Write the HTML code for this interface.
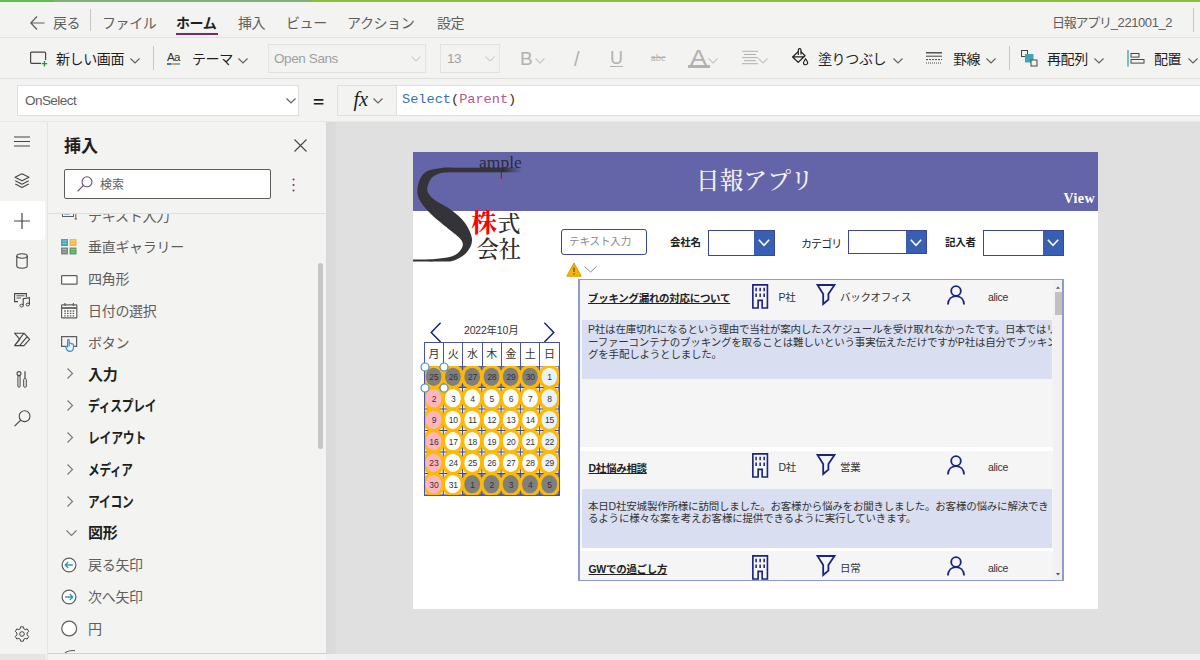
<!DOCTYPE html>
<html lang="ja">
<head>
<meta charset="utf-8">
<title>日報アプリ_221001_2</title>
<style>
*{box-sizing:border-box;margin:0;padding:0}
html,body{width:1200px;height:660px;overflow:hidden;background:#f3f3f2}
body{position:relative;font-family:"Liberation Sans","Noto Sans CJK JP",sans-serif;color:#201f1e;font-size:14px}
.abs{position:absolute}
.t{position:absolute;white-space:nowrap;line-height:1}
#green{left:0;top:0;width:1200px;height:2px;background:linear-gradient(90deg,#62bd4e 0 4.5%,#80b07a 4.5% 26%,#8dbd3c 26% 100%)}
#menubar{left:0;top:2px;width:1200px;height:36px;background:#f3f3f2;border-bottom:1px solid #e3e2e0}
#toolbar{left:0;top:38px;width:1200px;height:41px;background:#f3f3f2;border-bottom:1px solid #e1dfdd}
#fbar{left:0;top:79px;width:1200px;height:43px;background:#f3f3f2;border-bottom:1px solid #e8e7e5}
.menu{color:#605e5c;font-size:14px;top:16px;letter-spacing:-0.4px}
.tb{font-size:14px;top:52px;color:#201f1e;letter-spacing:-0.4px}
.dis{color:#a19f9d}
svg{position:absolute;overflow:visible}
#rail{left:0;top:122px;width:47px;height:538px;background:#f3f3f2}
#panel{left:47px;top:122px;width:279px;height:538px;background:#f3f3f2;border-left:1px solid #e6e5e3}
#canvas{left:326px;top:122px;width:874px;height:538px;background:#e0e0e0}
#screen{left:413px;top:151.8px;width:685px;height:457px;background:#fff}
.item{font-size:14px;color:#605e5c;letter-spacing:-0.3px}
.cat{font-size:15px;color:#201f1e;font-weight:bold;letter-spacing:-0.3px}

.app{font-family:"Liberation Sans","Noto Sans CJK JP",sans-serif}
.lbl{font-size:10.5px;color:#222;font-weight:bold;letter-spacing:-0.3px}
.g{font-size:10.5px;color:#333;letter-spacing:-0.3px}
.gt{font-size:10.5px;color:#222;font-weight:bold;text-decoration:underline;letter-spacing:-0.3px}
.gb{font-size:10.5px;color:#333;line-height:12.5px;letter-spacing:-0.2px;white-space:nowrap;position:absolute}
.dd{position:absolute;background:#fff;border:1.5px solid #3d4596}
.ddb{position:absolute;background:#3860b2}
.wk{position:absolute;top:341.8px;height:25.2px;background:#fff;border:1.5px solid #4d53a3;font-size:11px;color:#333;text-align:center;line-height:22.5px}
.dn{position:absolute;font-size:8.5px;color:#333;text-align:center;width:20px;line-height:10px;letter-spacing:-0.2px}
</style>
</head>
<body>
<div id="green" class="abs"></div>
<div id="menubar" class="abs"></div>
<div id="toolbar" class="abs"></div>
<div id="fbar" class="abs"></div>
<div id="rail" class="abs"></div>
<div id="panel" class="abs"></div>
<div id="canvas" class="abs"></div>
<div id="screen" class="abs"></div>

<svg class="abs" style="left:30px;top:16px" width="15" height="14" viewBox="0 0 15 14"><path d="M7 0.5 L0.8 7 L7 13.5 M0.8 7 H14.5" fill="none" stroke="#605e5c" stroke-width="1.2"/></svg>
<div class="t menu" style="left:53px">戻る</div>
<div class="abs" style="left:90px;top:9px;width:1px;height:22px;background:#c8c6c4"></div>
<div class="t menu" style="left:102px">ファイル</div>
<div class="t menu" style="left:176px;font-weight:bold;color:#201f1e">ホーム</div>
<div class="abs" style="left:176px;top:33px;width:42px;height:2px;background:#742774"></div>
<div class="t menu" style="left:238px">挿入</div>
<div class="t menu" style="left:286px">ビュー</div>
<div class="t menu" style="left:347px">アクション</div>
<div class="t menu" style="left:437px">設定</div>
<div class="t menu" style="left:1052px;font-size:13px;top:16px;letter-spacing:-1.25px">日報アプリ<span style="letter-spacing:-0.42px">_221001_2</span></div>
<div class="abs" style="left:1193px;top:8px;width:1px;height:24px;background:#c8c6c4"></div>


<svg style="left:30px;top:51px" width="18" height="16" viewBox="0 0 18 16"><rect x="0.6" y="1.1" width="15" height="11.3" rx="1" fill="none" stroke="#484644" stroke-width="1.2"/><rect x="11" y="9" width="7" height="7" fill="#f3f3f2"/><path d="M14.5 10 V15.4 M11.8 12.7 H17.2" stroke="#2e8b3a" stroke-width="1.3"/></svg>
<div class="t tb" style="left:56px">新しい画面</div>
<svg style="left:130px;top:58px" width="10" height="6" viewBox="0 0 10 6"><path d="M0.5 0.5 L5 5 L9.5 0.5" fill="none" stroke="#605e5c" stroke-width="1.1"/></svg>
<div class="abs" style="left:153px;top:46px;width:1px;height:24px;background:#c8c6c4"></div>
<div class="t" style="left:167px;top:52px;font-size:11.5px;letter-spacing:-0.6px;color:#323130">Aa</div>
<div class="abs" style="left:167px;top:63px;width:13px;height:2px;background:linear-gradient(90deg,#2b7cd3 0 30%,#e8a33d 30% 65%,#6bb8c4 65% 100%)"></div>
<div class="t tb" style="left:192px">テーマ</div>
<svg style="left:238px;top:58px" width="10" height="6" viewBox="0 0 10 6"><path d="M0.5 0.5 L5 5 L9.5 0.5" fill="none" stroke="#605e5c" stroke-width="1.1"/></svg>
<div class="abs" style="left:268px;top:44px;width:158px;height:29px;border:1px solid #e4e2e0;background:#f3f3f2"></div>
<div class="t dis" style="left:274px;top:52px;font-size:13.5px;letter-spacing:-0.4px">Open Sans</div>
<svg style="left:411px;top:56px" width="10" height="6" viewBox="0 0 10 6"><path d="M0.5 0.5 L5 5 L9.5 0.5" fill="none" stroke="#d2d0ce" stroke-width="1.1"/></svg>
<div class="abs" style="left:440px;top:44px;width:60px;height:29px;border:1px solid #e4e2e0;background:#f3f3f2"></div>
<div class="t dis" style="left:447px;top:52px;font-size:13.5px;letter-spacing:-0.4px">13</div>
<svg style="left:485px;top:56px" width="10" height="6" viewBox="0 0 10 6"><path d="M0.5 0.5 L5 5 L9.5 0.5" fill="none" stroke="#d2d0ce" stroke-width="1.1"/></svg>
<div class="t dis" style="left:520px;top:49px;font-size:19px;color:#b3b1af">B</div>
<svg style="left:535px;top:58px" width="10" height="6" viewBox="0 0 10 6"><path d="M0.5 0.5 L5 5 L9.5 0.5" fill="none" stroke="#c8c6c4" stroke-width="1.1"/></svg>
<div class="t dis" style="left:574px;top:48.5px;font-size:20px;color:#b3b1af">/</div>
<div class="t dis" style="left:610px;top:49px;font-size:18px;color:#b3b1af;text-decoration:underline;text-underline-offset:2px;text-decoration-thickness:1px">U</div>
<div class="t dis" style="left:651px;top:53px;font-size:10.5px;color:#b3b1af;text-decoration:line-through;font-family:'Liberation Serif',serif">abc</div>
<div class="t dis" style="left:690px;top:47px;font-size:22px;color:#b3b1af;transform:scaleX(1.15);transform-origin:left">A</div>
<div class="abs" style="left:688px;top:65px;width:22px;height:3px;background:#b3b1af"></div>
<svg style="left:708px;top:58px" width="10" height="6" viewBox="0 0 10 6"><path d="M0.5 0.5 L5 5 L9.5 0.5" fill="none" stroke="#c8c6c4" stroke-width="1.1"/></svg>
<svg style="left:742px;top:50px" width="17" height="15" viewBox="0 0 17 15"><path d="M0 1.3 H16 M2 4.5 H14 M0 7.6 H16 M2 10.7 H14 M0 13.7 H16" stroke="#b3b1af" stroke-width="1"/></svg>
<svg style="left:758px;top:58px" width="10" height="6" viewBox="0 0 10 6"><path d="M0.5 0.5 L5 5 L9.5 0.5" fill="none" stroke="#c8c6c4" stroke-width="1.1"/></svg>
<svg style="left:791px;top:47px" width="18" height="19" viewBox="791 47 18 19"><path d="M798.2 51.6 L792.6 57 L798.2 62.4 L805 55.8 L800.8 51.6 M793.8 56.8 H804" fill="none" stroke="#201f1e" stroke-width="1.25" stroke-linejoin="round"/><path d="M798.3 55 V50.2 C798.3 48.2 801 48.2 801 50.2 V54.6" fill="none" stroke="#201f1e" stroke-width="1.2"/><path d="M805.6 58.8 C806.7 60.5 807.7 61.7 807.7 62.7 A2.1 2.1 0 0 1 803.5 62.7 C803.5 61.7 804.5 60.5 805.6 58.8Z" fill="none" stroke="#201f1e" stroke-width="1.1"/></svg>
<div class="t tb" style="left:818px">塗りつぶし</div>
<svg style="left:893px;top:58px" width="10" height="6" viewBox="0 0 10 6"><path d="M0.5 0.5 L5 5 L9.5 0.5" fill="none" stroke="#605e5c" stroke-width="1.1"/></svg>
<svg style="left:926px;top:52px" width="17" height="12" viewBox="0 0 17 12"><path d="M0 0.8 H16" stroke="#484644" stroke-width="1.4"/><path d="M0 4.2 H16" stroke="#484644" stroke-width="1"/><path d="M0 7.6 H16" stroke="#484644" stroke-width="1" stroke-dasharray="2 1"/><path d="M0 11 H16" stroke="#484644" stroke-width="1" stroke-dasharray="1 1"/></svg>
<div class="t tb" style="left:953px">罫線</div>
<svg style="left:986px;top:58px" width="10" height="6" viewBox="0 0 10 6"><path d="M0.5 0.5 L5 5 L9.5 0.5" fill="none" stroke="#605e5c" stroke-width="1.1"/></svg>
<div class="abs" style="left:1009px;top:46px;width:1px;height:24px;background:#c8c6c4"></div>
<svg style="left:1021px;top:50px" width="17" height="17" viewBox="0 0 17 17"><rect x="0.5" y="0.5" width="6" height="6" fill="none" stroke="#484644"/><rect x="4" y="4" width="8.5" height="8.5" fill="#3fa7b8"/><rect x="10" y="10" width="6" height="6" fill="#f3f3f2" stroke="#484644"/></svg>
<div class="t tb" style="left:1047px">再配列</div>
<svg style="left:1094px;top:58px" width="10" height="6" viewBox="0 0 10 6"><path d="M0.5 0.5 L5 5 L9.5 0.5" fill="none" stroke="#605e5c" stroke-width="1.1"/></svg>
<svg style="left:1127px;top:50px" width="18" height="17" viewBox="0 0 18 17"><path d="M1 0 V16.5" stroke="#3fa7b8" stroke-width="1.4"/><rect x="4" y="3.5" width="8" height="3.6" fill="none" stroke="#484644"/><rect x="4" y="9.5" width="13" height="3.6" fill="none" stroke="#484644"/></svg>
<div class="t tb" style="left:1154px">配置</div>
<svg style="left:1188px;top:58px" width="10" height="6" viewBox="0 0 10 6"><path d="M0.5 0.5 L5 5 L9.5 0.5" fill="none" stroke="#605e5c" stroke-width="1.1"/></svg>


<div class="abs" style="left:17px;top:85px;width:282px;height:31px;background:#fff;border:1px solid #e1dfdd"></div>
<div class="t" style="left:25px;top:94px;font-size:13.5px;color:#605e5c;letter-spacing:-0.55px">OnSelect</div>
<svg style="left:286px;top:98px" width="10" height="6" viewBox="0 0 10 6"><path d="M0.5 0.5 L5 5 L9.5 0.5" fill="none" stroke="#605e5c" stroke-width="1.1"/></svg>
<div class="t" style="left:313px;top:92.2px;font-size:19px;font-weight:bold;color:#201f1e;transform:scaleY(0.78);transform-origin:center">=</div>
<div class="abs" style="left:337px;top:84.5px;width:863px;height:31.5px;background:#fff;border:1px solid #e1dfdd;border-right:none"></div>
<div class="abs" style="left:338px;top:85.5px;width:58.5px;height:29.5px;background:#f3f3f2;border-right:1px solid #e1dfdd"></div>
<div class="t" style="left:353.5px;top:89px;font-size:20.5px;font-style:italic;font-family:'Liberation Serif',serif;color:#201f1e;letter-spacing:-0.2px">fx</div>
<svg style="left:373px;top:98px" width="10" height="6" viewBox="0 0 10 6"><path d="M0.5 0.5 L5 5 L9.5 0.5" fill="none" stroke="#605e5c" stroke-width="1.1"/></svg>
<div class="t" style="left:402px;top:93px;font-size:13.6px;font-family:'Liberation Mono','DejaVu Sans Mono',monospace;color:#323130"><span style="color:#3b71b9">Select</span>(<span style="color:#b8558f">Parent</span>)</div>


<div class="abs" style="left:0;top:201px;width:45px;height:39px;background:#fff;border-radius:0 3px 3px 0"></div>
<svg style="left:14px;top:136px" width="16" height="11" viewBox="0 0 16 11"><path d="M0 1 H16 M0 5.5 H16 M0 10 H16" stroke="#484644" stroke-width="1.1"/></svg>
<svg style="left:14px;top:173px" width="16" height="16" viewBox="0 0 16 16"><path d="M8 0.8 L15 4.3 L8 7.8 L1 4.3 Z M1.3 7.8 L8 11.2 L14.7 7.8 M1.3 11 L8 14.6 L14.7 11" fill="none" stroke="#484644" stroke-width="1.1" stroke-linejoin="round"/></svg>
<svg style="left:14px;top:213px" width="16" height="16" viewBox="0 0 16 16"><path d="M8 0 V16 M0 8 H16" stroke="#484644" stroke-width="1.2"/></svg>
<svg style="left:16px;top:253px" width="12" height="16" viewBox="0 0 12 16"><path d="M0.8 3 V13 C0.8 14.4 3 15.2 6 15.2 S11.2 14.4 11.2 13 V3" fill="none" stroke="#484644" stroke-width="1.1"/><ellipse cx="6" cy="3" rx="5.2" ry="2.2" fill="none" stroke="#484644" stroke-width="1.1"/></svg>
<svg style="left:14px;top:293px" width="17" height="15" viewBox="0 0 17 15"><path d="M4 8.6 H0.6 V0.6 H12.4 V4" fill="none" stroke="#484644" stroke-width="1.1"/><path d="M2.5 2.8 H10.5 M2.5 5 H7" stroke="#484644" stroke-width="0.9"/><path d="M9.2 12.5 V5.8 L15.4 4.6 V11.4" fill="none" stroke="#484644" stroke-width="1.1"/><ellipse cx="7.6" cy="12.6" rx="1.7" ry="1.4" fill="none" stroke="#484644" stroke-width="1"/><ellipse cx="13.8" cy="11.5" rx="1.7" ry="1.4" fill="none" stroke="#484644" stroke-width="1"/></svg>
<svg style="left:14px;top:332px" width="17" height="15" viewBox="0 0 17 15"><path d="M0.6 1.2 H10 L15.6 7.4 L10 13.6 H0.6 L5.8 7.4 Z M9.6 1.6 L0.9 13.2 M13 4.8 L5.8 13.4" fill="none" stroke="#484644" stroke-width="1.1" stroke-linejoin="round"/></svg>
<svg style="left:16px;top:371px" width="12" height="17" viewBox="0 0 12 17"><circle cx="3" cy="2.6" r="2" fill="none" stroke="#484644" stroke-width="1.1"/><rect x="1.9" y="4.8" width="2.2" height="11.4" rx="1" fill="none" stroke="#484644" stroke-width="1"/><path d="M9 0.3 V7.6" stroke="#484644" stroke-width="1.2"/><rect x="7.7" y="7.6" width="2.6" height="8.6" rx="1" fill="none" stroke="#484644" stroke-width="1"/></svg>
<svg style="left:14px;top:410px" width="17" height="17" viewBox="0 0 17 17"><circle cx="10.6" cy="6.2" r="5.4" fill="none" stroke="#484644" stroke-width="1.1"/><path d="M6.7 10.1 L0.6 16.2" stroke="#484644" stroke-width="1.2"/></svg>
<svg style="left:14px;top:626px" width="16" height="16" viewBox="0 0 16 16"><circle cx="8" cy="8" r="2.3" fill="none" stroke="#484644" stroke-width="1"/><path d="M6.6 0.8 H9.4 L9.9 2.9 L11.2 3.6 L13.2 2.9 L14.7 5.4 L13.1 6.9 V8.9 L14.7 10.5 L13.2 13 L11.2 12.4 L9.9 13.1 L9.4 15.2 H6.6 L6.1 13.1 L4.8 12.4 L2.8 13 L1.3 10.5 L2.9 8.9 V6.9 L1.3 5.4 L2.8 2.9 L4.8 3.6 L6.1 2.9 Z" fill="none" stroke="#484644" stroke-width="1" stroke-linejoin="round"/></svg>


<div class="t" style="left:64px;top:138px;font-size:17px;font-weight:bold;color:#201f1e">挿入</div>
<svg style="left:294px;top:139px" width="13" height="13" viewBox="0 0 13 13"><path d="M0.5 0.5 L12.5 12.5 M12.5 0.5 L0.5 12.5" stroke="#484644" stroke-width="1.1"/></svg>
<div class="abs" style="left:64px;top:169px;width:207px;height:30px;background:#fff;border:1px solid #605e5c;border-radius:2px"></div>
<svg style="left:77px;top:176px" width="16" height="16" viewBox="0 0 16 16"><circle cx="10" cy="5.8" r="5" fill="none" stroke="#6b4a78" stroke-width="1.1"/><path d="M6.4 9.4 L0.6 15.4" stroke="#6b4a78" stroke-width="1.2"/></svg>
<div class="t" style="left:100px;top:179px;font-size:12px;color:#605e5c">検索</div>
<svg style="left:292px;top:178px" width="3" height="14" viewBox="0 0 3 14"><circle cx="1.5" cy="1.5" r="1" fill="#742774"/><circle cx="1.5" cy="7" r="1" fill="#742774"/><circle cx="1.5" cy="12.5" r="1" fill="#742774"/></svg>
<div class="abs" style="left:48px;top:213px;width:278px;height:1px;background:#e1dfdd"></div>
<div class="abs" style="left:48px;top:214px;width:278px;height:10px;overflow:hidden">
 <div class="t item" style="left:40px;top:-5px">テキスト入力</div>
 <svg style="left:14px;top:-7px" width="16" height="14" viewBox="0 0 16 14"><rect x="0.5" y="0.5" width="11" height="9" fill="none" stroke="#605e5c"/><rect x="2.5" y="5" width="5" height="2.6" fill="#3a96dd"/><path d="M12.5 3 H15 M13.8 3 V12 M12.5 12 H15" stroke="#605e5c" stroke-width="1" fill="none"/></svg>
</div>
<svg style="left:61px;top:239px" width="16" height="16" viewBox="0 0 16 16"><rect x="0" y="0" width="7" height="7" fill="#3fa7b8"/><rect x="8.5" y="0" width="7" height="7" fill="#f2b84b"/><rect x="0" y="8.5" width="7" height="7" fill="#7a8a82"/><rect x="8.5" y="8.5" width="7" height="7" fill="#5aa05e"/><path d="M1.5 2 H5.5 M1.5 4.5 H5.5 M10 2 H14 M10 4.5 H14 M1.5 10.5 H5.5 M1.5 13 H5.5 M10 10.5 H14 M10 13 H14" stroke="#fff" stroke-width="0.7" opacity="0.6"/></svg>
<div class="t item" style="left:88px;top:240px">垂直ギャラリー</div>
<svg style="left:61px;top:275px" width="17" height="10" viewBox="0 0 17 10"><rect x="0.6" y="0.6" width="15.4" height="8.6" rx="0.5" fill="#fff" stroke="#605e5c" stroke-width="1.2"/></svg>
<div class="t item" style="left:88px;top:272px">四角形</div>
<svg style="left:61px;top:303px" width="17" height="16" viewBox="0 0 17 16"><rect x="0.6" y="1.8" width="15.2" height="13" rx="0.6" fill="#fff" stroke="#605e5c" stroke-width="1.2"/><path d="M0.6 5 H15.8" stroke="#605e5c" stroke-width="1.8"/><path d="M4 0 V3 M12.4 0 V3" stroke="#605e5c" stroke-width="1.2"/><path d="M3.2 8 H13.4 M3.2 10.4 H13.4 M3.2 12.8 H13.4" stroke="#605e5c" stroke-width="1.3" stroke-dasharray="1.6 1.2"/></svg>
<div class="t item" style="left:88px;top:304px">日付の選択</div>
<svg style="left:61px;top:336px" width="17" height="16" viewBox="0 0 17 16"><path d="M5 10.4 H0.6 V0.6 H15.6 V10.4 H13" fill="none" stroke="#605e5c" stroke-width="1.2"/><path d="M8.2 4.2 V10.5 M8.2 7.5 C9.2 6.6 10.2 6.8 10.4 8 C11.6 7.4 12.6 8 12.4 9.6 V11.6 C12.4 14 11 15.4 9 15.4 C7 15.4 6 14.4 5.4 12.8 L4.6 10.6 C5.2 10 6.2 10.2 6.6 11 V4.2 C6.6 3.2 8.2 3.2 8.2 4.2Z" fill="#f3f3f2" stroke="#2b88d8" stroke-width="1.1" stroke-linejoin="round"/></svg>
<div class="t item" style="left:88px;top:336px">ボタン</div>
<svg style="left:67px;top:368px" width="6" height="11" viewBox="0 0 6 11"><path d="M0.5 0.5 L5.5 5.5 L0.5 10.5" fill="none" stroke="#797775" stroke-width="1.1"/></svg>
<div class="t cat" style="left:88px;top:367px">入力</div>
<svg style="left:67px;top:400px" width="6" height="11" viewBox="0 0 6 11"><path d="M0.5 0.5 L5.5 5.5 L0.5 10.5" fill="none" stroke="#797775" stroke-width="1.1"/></svg>
<div class="t cat" style="left:88px;top:398px;transform:scaleX(0.782);transform-origin:left">ディスプレイ</div>
<svg style="left:67px;top:432px" width="6" height="11" viewBox="0 0 6 11"><path d="M0.5 0.5 L5.5 5.5 L0.5 10.5" fill="none" stroke="#797775" stroke-width="1.1"/></svg>
<div class="t cat" style="left:88px;top:430px;transform:scaleX(0.789);transform-origin:left">レイアウト</div>
<svg style="left:67px;top:464px" width="6" height="11" viewBox="0 0 6 11"><path d="M0.5 0.5 L5.5 5.5 L0.5 10.5" fill="none" stroke="#797775" stroke-width="1.1"/></svg>
<div class="t cat" style="left:88px;top:462px;transform:scaleX(0.774);transform-origin:left">メディア</div>
<svg style="left:67px;top:496px" width="6" height="11" viewBox="0 0 6 11"><path d="M0.5 0.5 L5.5 5.5 L0.5 10.5" fill="none" stroke="#797775" stroke-width="1.1"/></svg>
<div class="t cat" style="left:88px;top:494px;transform:scaleX(0.782);transform-origin:left">アイコン</div>
<svg style="left:66px;top:530px" width="11" height="6" viewBox="0 0 11 6"><path d="M0.5 0.5 L5.5 5.5 L10.5 0.5" fill="none" stroke="#797775" stroke-width="1.1"/></svg>
<div class="t cat" style="left:88px;top:525px">図形</div>
<svg style="left:61px;top:557px" width="16" height="16" viewBox="0 0 16 16"><circle cx="8" cy="8" r="6.9" fill="#fff" stroke="#605e5c" stroke-width="1.2"/><path d="M4.2 8 H11.8 M7.2 5 L4.2 8 L7.2 11" fill="none" stroke="#2b9ab8" stroke-width="1.3"/></svg>
<div class="t item" style="left:88px;top:558px">戻る矢印</div>
<svg style="left:61px;top:589px" width="16" height="16" viewBox="0 0 16 16"><circle cx="8" cy="8" r="6.9" fill="#fff" stroke="#605e5c" stroke-width="1.2"/><path d="M4.2 8 H11.8 M8.8 5 L11.8 8 L8.8 11" fill="none" stroke="#2b9ab8" stroke-width="1.3"/></svg>
<div class="t item" style="left:88px;top:590px">次へ矢印</div>
<svg style="left:61px;top:620px" width="17" height="17" viewBox="0 0 17 17"><circle cx="8.2" cy="8.5" r="7.4" fill="#fff" stroke="#605e5c" stroke-width="1.2"/></svg>
<div class="t item" style="left:88px;top:622px">円</div>
<svg style="left:64px;top:649.5px" width="12" height="4" viewBox="0 0 12 4"><path d="M0.5 4 C2 1.2 6 0.4 11 0.6" fill="none" stroke="#605e5c" stroke-width="1.1"/></svg>
<div class="abs" style="left:318px;top:263px;width:5px;height:186px;background:#c8c6c4;border-radius:3px"></div>
<div class="abs" style="left:48px;top:653px;width:279px;height:1px;background:#d2d0ce"></div>
<div class="abs" style="left:48px;top:654px;width:279px;height:6px;background:#f5f4f3"></div>
<div class="abs" style="left:0;top:654px;width:46px;height:6px;background:#e6e5e4"></div>
<div class="abs" style="left:326px;top:122px;width:10.5px;height:532px;background:linear-gradient(90deg,#d9d9d9 0,#dbdbdb 80%,#e0e0e0 100%)"></div>
<div class="abs" style="left:326px;top:654px;width:874px;height:6px;background:#f0f0f0"></div>


<div class="app">
<div class="abs" style="left:413px;top:151.7px;width:685px;height:59px;background:#6465a8"></div>
<div class="t" style="left:696px;top:170px;font-size:23.5px;font-weight:500;font-family:'Liberation Serif','Noto Serif CJK JP','Noto Serif CJK SC',serif;color:#f2f2f2;letter-spacing:0.3px">日報アプリ</div>
<div class="t" style="left:1063.5px;top:191.5px;font-size:14px;letter-spacing:0.4px;font-weight:bold;font-family:'Liberation Serif',serif;color:#fff">View</div>

<svg style="left:413px;top:152px" width="120" height="112" viewBox="413 152 120 112"><defs><linearGradient id="tp" x1="0" x2="1"><stop offset="0" stop-color="#333338"/><stop offset="0.75" stop-color="#333338"/><stop offset="1" stop-color="#333338" stop-opacity="0"/></linearGradient></defs>
<path d="M452.0 167.7 C450.2 167.7 445.3 167.4 441.4 167.9 C437.5 168.4 431.9 169.0 428.5 170.6 C425.1 172.2 422.7 174.2 420.8 177.5 C418.9 180.8 417.4 186.5 417.4 190.5 C417.3 194.5 418.1 197.3 420.5 201.4 C422.9 205.5 427.0 210.2 432.0 215.0 C437.0 219.8 445.8 226.6 450.5 230.5 C455.2 234.4 457.9 236.1 460.0 238.5 C462.1 240.9 463.0 242.8 462.8 245.0 C462.6 247.2 461.1 250.0 459.0 252.0 C456.9 254.0 454.5 255.6 450.5 256.8 C446.5 258.0 441.2 258.5 435.0 259.0 C428.8 259.5 416.7 259.5 413.0 259.6 L413.0 261.6 C417.5 261.6 433.2 261.8 440.0 261.6 C446.8 261.4 449.5 262.1 454.0 260.5 C458.5 258.9 463.8 255.8 466.8 252.3 C469.8 248.8 472.3 244.4 472.0 239.5 C471.7 234.6 468.6 228.0 465.0 223.0 C461.4 218.0 455.7 213.4 450.5 209.5 C445.3 205.6 437.9 202.7 434.0 199.5 C430.1 196.3 428.1 193.6 427.4 190.5 C426.7 187.4 428.5 183.4 429.6 181.0 C430.7 178.6 432.0 177.3 434.0 176.0 C436.0 174.7 438.5 173.6 441.5 173.0 C444.5 172.4 450.2 172.4 452.0 172.3 Z" fill="#333338"/>
<rect x="451" y="167.7" width="71" height="4.6" fill="url(#tp)"/>
<path d="M501.3 170 V177" stroke="#333338" stroke-width="1"/><rect x="500.6" y="177.4" width="1.6" height="1.6" fill="#e00"/>
</svg>
<div class="t" style="left:479px;top:154px;font-size:17.5px;font-family:'Liberation Serif',serif;color:#2b2b3a">ample</div>
<div class="t" style="left:471px;top:211px;font-size:26px;font-weight:bold;font-family:'Liberation Serif','Noto Serif CJK JP','Noto Serif CJK SC',serif;color:#f00">株</div>
<div class="t" style="left:497.5px;top:213px;font-size:23px;font-weight:500;font-family:'Liberation Serif','Noto Serif CJK JP','Noto Serif CJK SC',serif;color:#2a2a2a">式</div>
<div class="t" style="left:476.5px;top:238.5px;font-size:22.5px;font-weight:500;font-family:'Liberation Serif','Noto Serif CJK JP','Noto Serif CJK SC',serif;color:#2a2a2a;letter-spacing:-0.5px">会社</div>

<div class="abs" style="left:561px;top:228.5px;width:86px;height:26px;background:#fff;border:1.5px solid #3d4596;border-radius:3px"></div>
<div class="t" style="left:569px;top:236px;font-size:10.5px;color:#8a8a8a;letter-spacing:-0.1px">テキスト入力</div>
<div class="t lbl" style="left:670px;top:237px">会社名</div>
<div class="dd" style="left:708px;top:229.5px;width:66.5px;height:26px"></div><div class="ddb" style="left:753.5px;top:230.5px;width:20px;height:24px"></div><svg style="left:757.5px;top:238.5px" width="12" height="8" viewBox="0 0 12 8"><path d="M0.8 0.8 L6 6.4 L11.2 0.8" fill="none" stroke="#fff" stroke-width="1.6"/></svg>
<div class="t" style="left:801px;top:238.5px;font-size:11px;color:#222;letter-spacing:-0.9px">カテゴリ</div>
<div class="dd" style="left:848px;top:230.4px;width:78.5px;height:23.2px"></div><div class="ddb" style="left:905.5px;top:231.4px;width:20px;height:21.2px"></div><svg style="left:909.5px;top:238.5px" width="12" height="8" viewBox="0 0 12 8"><path d="M0.8 0.8 L6 6.4 L11.2 0.8" fill="none" stroke="#fff" stroke-width="1.6"/></svg>
<div class="t lbl" style="left:945px;top:237px">記入者</div>
<div class="dd" style="left:983px;top:229.5px;width:81px;height:26.5px"></div><div class="ddb" style="left:1043px;top:230.5px;width:20px;height:24.5px"></div><svg style="left:1047px;top:238.5px" width="12" height="8" viewBox="0 0 12 8"><path d="M0.8 0.8 L6 6.4 L11.2 0.8" fill="none" stroke="#fff" stroke-width="1.6"/></svg>
<svg style="left:566px;top:262px" width="16" height="15" viewBox="0 0 16 15"><path d="M8 1 L15.2 14.2 H0.8 Z" fill="#f7b500" stroke="#d99a00" stroke-width="1" stroke-linejoin="round"/><path d="M8 5.5 V10" stroke="#5a4a00" stroke-width="1.2"/><circle cx="8" cy="12" r="0.8" fill="#5a4a00"/></svg>
<svg style="left:584px;top:266px" width="13" height="7" viewBox="0 0 13 7"><path d="M0.5 0.5 L6.5 6 L12.5 0.5" fill="none" stroke="#8a8886" stroke-width="1"/></svg>
<svg style="left:430px;top:322px" width="12" height="21" viewBox="0 0 12 21"><path d="M10.6 0.8 L1.2 10.4 L10.6 20" fill="none" stroke="#1a237e" stroke-width="1.5"/></svg>
<svg style="left:543px;top:322px" width="12" height="21" viewBox="0 0 12 21"><path d="M1.4 0.8 L10.8 10.4 L1.4 20" fill="none" stroke="#1a237e" stroke-width="1.5"/></svg>
<div class="t" style="left:464px;top:325px;font-size:10.5px;color:#333;letter-spacing:-0.2px">2022年10月</div>
<div class="wk" style="left:423.8px;width:20.3px">月</div>
<div class="wk" style="left:443.1px;width:20.3px">火</div>
<div class="wk" style="left:462.3px;width:20.3px">水</div>
<div class="wk" style="left:481.6px;width:20.3px">木</div>
<div class="wk" style="left:500.9px;width:20.3px">金</div>
<div class="wk" style="left:520.2px;width:20.3px">土</div>
<div class="wk" style="left:539.4px;width:20.3px">日</div>
<svg style="left:424.3px;top:366.3px;overflow:hidden" width="134.9" height="129.0" viewBox="0 0 134.9 129.0"><rect x="0" y="0" width="134.9" height="129.0" fill="#e9ebf7"/><rect x="0.0" y="0.0" width="19.3" height="21.5" fill="#8a8a9a"/><rect x="19.3" y="0.0" width="19.3" height="21.5" fill="#8a8a9a"/><rect x="38.5" y="0.0" width="19.3" height="21.5" fill="#8a8a9a"/><rect x="57.8" y="0.0" width="19.3" height="21.5" fill="#8a8a9a"/><rect x="77.1" y="0.0" width="19.3" height="21.5" fill="#8a8a9a"/><rect x="96.4" y="0.0" width="19.3" height="21.5" fill="#8a8a9a"/><rect x="38.5" y="107.5" width="19.3" height="21.5" fill="#8a8a9a"/><rect x="57.8" y="107.5" width="19.3" height="21.5" fill="#8a8a9a"/><rect x="77.1" y="107.5" width="19.3" height="21.5" fill="#8a8a9a"/><rect x="96.4" y="107.5" width="19.3" height="21.5" fill="#8a8a9a"/><rect x="115.6" y="107.5" width="19.3" height="21.5" fill="#8a8a9a"/><path d="M0.00 0 V129.0" stroke="#3d4596" stroke-width="1"/><path d="M19.27 0 V129.0" stroke="#3d4596" stroke-width="1"/><path d="M38.54 0 V129.0" stroke="#3d4596" stroke-width="1"/><path d="M57.81 0 V129.0" stroke="#3d4596" stroke-width="1"/><path d="M77.09 0 V129.0" stroke="#3d4596" stroke-width="1"/><path d="M96.36 0 V129.0" stroke="#3d4596" stroke-width="1"/><path d="M115.63 0 V129.0" stroke="#3d4596" stroke-width="1"/><path d="M134.90 0 V129.0" stroke="#3d4596" stroke-width="1"/><path d="M0 0.00 H134.9" stroke="#3d4596" stroke-width="1"/><path d="M0 21.50 H134.9" stroke="#3d4596" stroke-width="1"/><path d="M0 43.00 H134.9" stroke="#3d4596" stroke-width="1"/><path d="M0 64.50 H134.9" stroke="#3d4596" stroke-width="1"/><path d="M0 86.00 H134.9" stroke="#3d4596" stroke-width="1"/><path d="M0 107.50 H134.9" stroke="#3d4596" stroke-width="1"/><path d="M0 129.00 H134.9" stroke="#3d4596" stroke-width="1"/><ellipse cx="9.6" cy="10.8" rx="11.1" ry="12.3" fill="#ffb900"/><ellipse cx="28.9" cy="10.8" rx="11.1" ry="12.3" fill="#ffb900"/><ellipse cx="48.2" cy="10.8" rx="11.1" ry="12.3" fill="#ffb900"/><ellipse cx="67.5" cy="10.8" rx="11.1" ry="12.3" fill="#ffb900"/><ellipse cx="86.7" cy="10.8" rx="11.1" ry="12.3" fill="#ffb900"/><ellipse cx="106.0" cy="10.8" rx="11.1" ry="12.3" fill="#ffb900"/><ellipse cx="125.3" cy="10.8" rx="11.1" ry="12.3" fill="#ffb900"/><ellipse cx="9.6" cy="32.2" rx="11.1" ry="12.3" fill="#ffb900"/><ellipse cx="28.9" cy="32.2" rx="11.1" ry="12.3" fill="#ffb900"/><ellipse cx="48.2" cy="32.2" rx="11.1" ry="12.3" fill="#ffb900"/><ellipse cx="67.5" cy="32.2" rx="11.1" ry="12.3" fill="#ffb900"/><ellipse cx="86.7" cy="32.2" rx="11.1" ry="12.3" fill="#ffb900"/><ellipse cx="106.0" cy="32.2" rx="11.1" ry="12.3" fill="#ffb900"/><ellipse cx="125.3" cy="32.2" rx="11.1" ry="12.3" fill="#ffb900"/><ellipse cx="9.6" cy="53.8" rx="11.1" ry="12.3" fill="#ffb900"/><ellipse cx="28.9" cy="53.8" rx="11.1" ry="12.3" fill="#ffb900"/><ellipse cx="48.2" cy="53.8" rx="11.1" ry="12.3" fill="#ffb900"/><ellipse cx="67.5" cy="53.8" rx="11.1" ry="12.3" fill="#ffb900"/><ellipse cx="86.7" cy="53.8" rx="11.1" ry="12.3" fill="#ffb900"/><ellipse cx="106.0" cy="53.8" rx="11.1" ry="12.3" fill="#ffb900"/><ellipse cx="125.3" cy="53.8" rx="11.1" ry="12.3" fill="#ffb900"/><ellipse cx="9.6" cy="75.2" rx="11.1" ry="12.3" fill="#ffb900"/><ellipse cx="28.9" cy="75.2" rx="11.1" ry="12.3" fill="#ffb900"/><ellipse cx="48.2" cy="75.2" rx="11.1" ry="12.3" fill="#ffb900"/><ellipse cx="67.5" cy="75.2" rx="11.1" ry="12.3" fill="#ffb900"/><ellipse cx="86.7" cy="75.2" rx="11.1" ry="12.3" fill="#ffb900"/><ellipse cx="106.0" cy="75.2" rx="11.1" ry="12.3" fill="#ffb900"/><ellipse cx="125.3" cy="75.2" rx="11.1" ry="12.3" fill="#ffb900"/><ellipse cx="9.6" cy="96.8" rx="11.1" ry="12.3" fill="#ffb900"/><ellipse cx="28.9" cy="96.8" rx="11.1" ry="12.3" fill="#ffb900"/><ellipse cx="48.2" cy="96.8" rx="11.1" ry="12.3" fill="#ffb900"/><ellipse cx="67.5" cy="96.8" rx="11.1" ry="12.3" fill="#ffb900"/><ellipse cx="86.7" cy="96.8" rx="11.1" ry="12.3" fill="#ffb900"/><ellipse cx="106.0" cy="96.8" rx="11.1" ry="12.3" fill="#ffb900"/><ellipse cx="125.3" cy="96.8" rx="11.1" ry="12.3" fill="#ffb900"/><ellipse cx="9.6" cy="118.2" rx="11.1" ry="12.3" fill="#ffb900"/><ellipse cx="28.9" cy="118.2" rx="11.1" ry="12.3" fill="#ffb900"/><ellipse cx="48.2" cy="118.2" rx="11.1" ry="12.3" fill="#ffb900"/><ellipse cx="67.5" cy="118.2" rx="11.1" ry="12.3" fill="#ffb900"/><ellipse cx="86.7" cy="118.2" rx="11.1" ry="12.3" fill="#ffb900"/><ellipse cx="106.0" cy="118.2" rx="11.1" ry="12.3" fill="#ffb900"/><ellipse cx="125.3" cy="118.2" rx="11.1" ry="12.3" fill="#ffb900"/><ellipse cx="9.6" cy="10.8" rx="7.9" ry="9.1" fill="#7f7f7f"/><ellipse cx="28.9" cy="10.8" rx="7.9" ry="9.1" fill="#7f7f7f"/><ellipse cx="48.2" cy="10.8" rx="7.9" ry="9.1" fill="#7f7f7f"/><ellipse cx="67.5" cy="10.8" rx="7.9" ry="9.1" fill="#7f7f7f"/><ellipse cx="86.7" cy="10.8" rx="7.9" ry="9.1" fill="#7f7f7f"/><ellipse cx="106.0" cy="10.8" rx="7.9" ry="9.1" fill="#7f7f7f"/><ellipse cx="125.3" cy="10.8" rx="7.9" ry="9.1" fill="#e9f2fb"/><ellipse cx="9.6" cy="32.2" rx="7.9" ry="9.1" fill="#ffb6c1"/><ellipse cx="28.9" cy="32.2" rx="7.9" ry="9.1" fill="#fff"/><ellipse cx="48.2" cy="32.2" rx="7.9" ry="9.1" fill="#fff"/><ellipse cx="67.5" cy="32.2" rx="7.9" ry="9.1" fill="#fff"/><ellipse cx="86.7" cy="32.2" rx="7.9" ry="9.1" fill="#fff"/><ellipse cx="106.0" cy="32.2" rx="7.9" ry="9.1" fill="#fff"/><ellipse cx="125.3" cy="32.2" rx="7.9" ry="9.1" fill="#e9f2fb"/><ellipse cx="9.6" cy="53.8" rx="7.9" ry="9.1" fill="#ffb6c1"/><ellipse cx="28.9" cy="53.8" rx="7.9" ry="9.1" fill="#fff"/><ellipse cx="48.2" cy="53.8" rx="7.9" ry="9.1" fill="#fff"/><ellipse cx="67.5" cy="53.8" rx="7.9" ry="9.1" fill="#fff"/><ellipse cx="86.7" cy="53.8" rx="7.9" ry="9.1" fill="#fff"/><ellipse cx="106.0" cy="53.8" rx="7.9" ry="9.1" fill="#fff"/><ellipse cx="125.3" cy="53.8" rx="7.9" ry="9.1" fill="#e9f2fb"/><ellipse cx="9.6" cy="75.2" rx="7.9" ry="9.1" fill="#ffb6c1"/><ellipse cx="28.9" cy="75.2" rx="7.9" ry="9.1" fill="#fff"/><ellipse cx="48.2" cy="75.2" rx="7.9" ry="9.1" fill="#fff"/><ellipse cx="67.5" cy="75.2" rx="7.9" ry="9.1" fill="#fff"/><ellipse cx="86.7" cy="75.2" rx="7.9" ry="9.1" fill="#fff"/><ellipse cx="106.0" cy="75.2" rx="7.9" ry="9.1" fill="#fff"/><ellipse cx="125.3" cy="75.2" rx="7.9" ry="9.1" fill="#e9f2fb"/><ellipse cx="9.6" cy="96.8" rx="7.9" ry="9.1" fill="#ffb6c1"/><ellipse cx="28.9" cy="96.8" rx="7.9" ry="9.1" fill="#fff"/><ellipse cx="48.2" cy="96.8" rx="7.9" ry="9.1" fill="#fff"/><ellipse cx="67.5" cy="96.8" rx="7.9" ry="9.1" fill="#fff"/><ellipse cx="86.7" cy="96.8" rx="7.9" ry="9.1" fill="#fff"/><ellipse cx="106.0" cy="96.8" rx="7.9" ry="9.1" fill="#fff"/><ellipse cx="125.3" cy="96.8" rx="7.9" ry="9.1" fill="#e9f2fb"/><ellipse cx="9.6" cy="118.2" rx="7.9" ry="9.1" fill="#ffb6c1"/><ellipse cx="28.9" cy="118.2" rx="7.9" ry="9.1" fill="#fff"/><ellipse cx="48.2" cy="118.2" rx="7.9" ry="9.1" fill="#7f7f7f"/><ellipse cx="67.5" cy="118.2" rx="7.9" ry="9.1" fill="#7f7f7f"/><ellipse cx="86.7" cy="118.2" rx="7.9" ry="9.1" fill="#7f7f7f"/><ellipse cx="106.0" cy="118.2" rx="7.9" ry="9.1" fill="#7f7f7f"/><ellipse cx="125.3" cy="118.2" rx="7.9" ry="9.1" fill="#7f7f7f"/></svg>
<div class="abs" style="left:423.8px;top:365.8px;width:136px;height:130.2px;border:1.2px solid #4d53a3;border-top:none"></div>
<div class="dn" style="left:423.9px;top:372.1px">25</div>
<div class="dn" style="left:443.2px;top:372.1px">26</div>
<div class="dn" style="left:462.5px;top:372.1px">27</div>
<div class="dn" style="left:481.8px;top:372.1px">28</div>
<div class="dn" style="left:501.0px;top:372.1px">29</div>
<div class="dn" style="left:520.3px;top:372.1px">30</div>
<div class="dn" style="left:539.6px;top:372.1px">1</div>
<div class="dn" style="left:423.9px;top:393.6px">2</div>
<div class="dn" style="left:443.2px;top:393.6px">3</div>
<div class="dn" style="left:462.5px;top:393.6px">4</div>
<div class="dn" style="left:481.8px;top:393.6px">5</div>
<div class="dn" style="left:501.0px;top:393.6px">6</div>
<div class="dn" style="left:520.3px;top:393.6px">7</div>
<div class="dn" style="left:539.6px;top:393.6px">8</div>
<div class="dn" style="left:423.9px;top:415.1px">9</div>
<div class="dn" style="left:443.2px;top:415.1px">10</div>
<div class="dn" style="left:462.5px;top:415.1px">11</div>
<div class="dn" style="left:481.8px;top:415.1px">12</div>
<div class="dn" style="left:501.0px;top:415.1px">13</div>
<div class="dn" style="left:520.3px;top:415.1px">14</div>
<div class="dn" style="left:539.6px;top:415.1px">15</div>
<div class="dn" style="left:423.9px;top:436.6px">16</div>
<div class="dn" style="left:443.2px;top:436.6px">17</div>
<div class="dn" style="left:462.5px;top:436.6px">18</div>
<div class="dn" style="left:481.8px;top:436.6px">19</div>
<div class="dn" style="left:501.0px;top:436.6px">20</div>
<div class="dn" style="left:520.3px;top:436.6px">21</div>
<div class="dn" style="left:539.6px;top:436.6px">22</div>
<div class="dn" style="left:423.9px;top:458.1px">23</div>
<div class="dn" style="left:443.2px;top:458.1px">24</div>
<div class="dn" style="left:462.5px;top:458.1px">25</div>
<div class="dn" style="left:481.8px;top:458.1px">26</div>
<div class="dn" style="left:501.0px;top:458.1px">27</div>
<div class="dn" style="left:520.3px;top:458.1px">28</div>
<div class="dn" style="left:539.6px;top:458.1px">29</div>
<div class="dn" style="left:423.9px;top:479.6px">30</div>
<div class="dn" style="left:443.2px;top:479.6px">31</div>
<div class="dn" style="left:462.5px;top:479.6px">1</div>
<div class="dn" style="left:481.8px;top:479.6px">2</div>
<div class="dn" style="left:501.0px;top:479.6px">3</div>
<div class="dn" style="left:520.3px;top:479.6px">4</div>
<div class="dn" style="left:539.6px;top:479.6px">5</div>
<svg style="left:419.5px;top:361.5px" width="10" height="10" viewBox="0 0 10 10"><circle cx="5" cy="5" r="4" fill="#fff" stroke="#4a90c8" stroke-width="1.2"/></svg>
<svg style="left:439px;top:361.5px" width="10" height="10" viewBox="0 0 10 10"><circle cx="5" cy="5" r="4" fill="#fff" stroke="#4a90c8" stroke-width="1.2"/></svg>
<svg style="left:419.5px;top:382.8px" width="10" height="10" viewBox="0 0 10 10"><circle cx="5" cy="5" r="4" fill="#fff" stroke="#4a90c8" stroke-width="1.2"/></svg>
<svg style="left:439px;top:382.8px" width="10" height="10" viewBox="0 0 10 10"><circle cx="5" cy="5" r="4" fill="#fff" stroke="#4a90c8" stroke-width="1.2"/></svg>
<div class="abs" style="left:578px;top:279px;width:486px;height:302px;background:#f5f5f5;border:2px solid #8f9ad0;border-bottom-width:1.5px;border-top-width:1.5px;border-right-width:2px"></div>
<div class="abs" style="left:580px;top:280.5px;width:482px;height:299px;overflow:hidden">
  <div class="abs" style="left:2px;top:39px;width:470px;height:59px;background:#d9dff0"></div>
  <div class="abs" style="left:0;top:166px;width:473px;height:4px;background:#fff"></div>
  <div class="abs" style="left:2px;top:208.2px;width:470px;height:59.5px;background:#d9dff0"></div>
  <div class="abs" style="left:0;top:267.7px;width:473px;height:3.2px;background:#fff"></div>
  <div class="abs" style="left:473px;top:0;width:9px;height:299px;background:#f1f1f1"></div>
  <div class="abs" style="left:474.5px;top:11px;width:7px;height:23px;background:#c1c1c1"></div>
  <svg style="left:476.3px;top:5px" width="4" height="2.8" viewBox="0 0 6 4"><path d="M0 4 L3 0.5 L6 4 Z" fill="#505050"/></svg>
  <svg style="left:476.3px;top:292.5px" width="4" height="2.8" viewBox="0 0 6 4"><path d="M0 0 L3 3.5 L6 0 Z" fill="#505050"/></svg>
</div>
<div class="t gt" style="left:588px;top:293px">ブッキング漏れの対応について</div>
<svg style="left:752px;top:283.5px" width="16.3" height="25" viewBox="0 0 17 26"><path d="M0.9 25 V0.9 H16.1 V25 H10.6 V17 H6.4 V25 Z" fill="none" stroke="#1a237e" stroke-width="1.7"/><path d="M4.3 4 V7.4 M8.5 4 V7.4 M12.7 4 V7.4 M4.3 10 V13.4 M8.5 10 V13.4 M12.7 10 V13.4" stroke="#1a237e" stroke-width="1.6"/></svg>
<div class="t g" style="left:778.5px;top:292px">P社</div>
<svg style="left:816px;top:284px" width="20" height="22" viewBox="0 0 20 22"><path d="M1.5 1 H18.5 L12.4 10 V15.6 L7.2 20 V10 Z" fill="none" stroke="#1a237e" stroke-width="1.8" stroke-linejoin="miter"/></svg>
<div class="t g" style="left:840px;top:292px">バックオフィス</div>
<svg style="left:947px;top:285px" width="18" height="20" viewBox="0 0 18 20"><circle cx="9" cy="6" r="4.8" fill="none" stroke="#1a237e" stroke-width="1.8"/><path d="M0.9 19.5 C1.2 14.5 4.4 11.2 9 11.2 S16.8 14.5 17.1 19.5" fill="none" stroke="#1a237e" stroke-width="1.8"/></svg>
<div class="t g" style="left:988px;top:292px">alice</div>
<div class="abs" style="left:588px;top:323px;width:464px;height:40px;overflow:hidden"><div class="gb" style="left:0;top:0">P社は在庫切れになるという理由で当社が案内したスケジュールを受け取れなかったです。日本ではリ<br>ーファーコンテナのブッキングを取ることは難しいという事実伝えただけですがP社は自分でブッキン<br>グを手配しようとしました。</div></div>

<div class="t gt" style="left:588.5px;top:463px">D社悩み相談</div>
<svg style="left:752px;top:453px" width="16.3" height="25" viewBox="0 0 17 26"><path d="M0.9 25 V0.9 H16.1 V25 H10.6 V17 H6.4 V25 Z" fill="none" stroke="#1a237e" stroke-width="1.7"/><path d="M4.3 4 V7.4 M8.5 4 V7.4 M12.7 4 V7.4 M4.3 10 V13.4 M8.5 10 V13.4 M12.7 10 V13.4" stroke="#1a237e" stroke-width="1.6"/></svg>
<div class="t g" style="left:778.5px;top:461.5px">D社</div>
<svg style="left:816px;top:453.5px" width="20" height="22" viewBox="0 0 20 22"><path d="M1.5 1 H18.5 L12.4 10 V15.6 L7.2 20 V10 Z" fill="none" stroke="#1a237e" stroke-width="1.8" stroke-linejoin="miter"/></svg>
<div class="t g" style="left:840px;top:461.5px">営業</div>
<svg style="left:947px;top:454.5px" width="18" height="20" viewBox="0 0 18 20"><circle cx="9" cy="6" r="4.8" fill="none" stroke="#1a237e" stroke-width="1.8"/><path d="M0.9 19.5 C1.2 14.5 4.4 11.2 9 11.2 S16.8 14.5 17.1 19.5" fill="none" stroke="#1a237e" stroke-width="1.8"/></svg>
<div class="t g" style="left:988px;top:461.5px">alice</div>
<div class="abs" style="left:588px;top:499.5px;width:464px;height:40px;overflow:hidden"><div class="gb" style="left:0;top:0">本日D社安城製作所様に訪問しました。お客様から悩みをお聞きしました。お客様の悩みに解決でき<br>るように様々な案を考えお客様に提供できるように実行していきます。</div></div>

<div class="t gt" style="left:588.5px;top:564px">GWでの過ごし方</div>
<div class="abs" style="left:740px;top:550px;width:240px;height:29.5px;overflow:hidden">
<svg style="left:12px;top:4.5px" width="16.3" height="25" viewBox="0 0 17 26"><path d="M0.9 25 V0.9 H16.1 V25 H10.6 V17 H6.4 V25 Z" fill="none" stroke="#1a237e" stroke-width="1.7"/><path d="M4.3 4 V7.4 M8.5 4 V7.4 M12.7 4 V7.4 M4.3 10 V13.4 M8.5 10 V13.4 M12.7 10 V13.4" stroke="#1a237e" stroke-width="1.6"/></svg>
<svg style="left:76px;top:5px" width="20" height="22" viewBox="0 0 20 22"><path d="M1.5 1 H18.5 L12.4 10 V15.6 L7.2 20 V10 Z" fill="none" stroke="#1a237e" stroke-width="1.8" stroke-linejoin="miter"/></svg>
<svg style="left:207px;top:6px" width="18" height="20" viewBox="0 0 18 20"><circle cx="9" cy="6" r="4.8" fill="none" stroke="#1a237e" stroke-width="1.8"/><path d="M0.9 19.5 C1.2 14.5 4.4 11.2 9 11.2 S16.8 14.5 17.1 19.5" fill="none" stroke="#1a237e" stroke-width="1.8"/></svg>
</div>
<div class="t g" style="left:840px;top:563px">日常</div>
<div class="t g" style="left:988px;top:563px">alice</div>
</div>

</body>
</html>
